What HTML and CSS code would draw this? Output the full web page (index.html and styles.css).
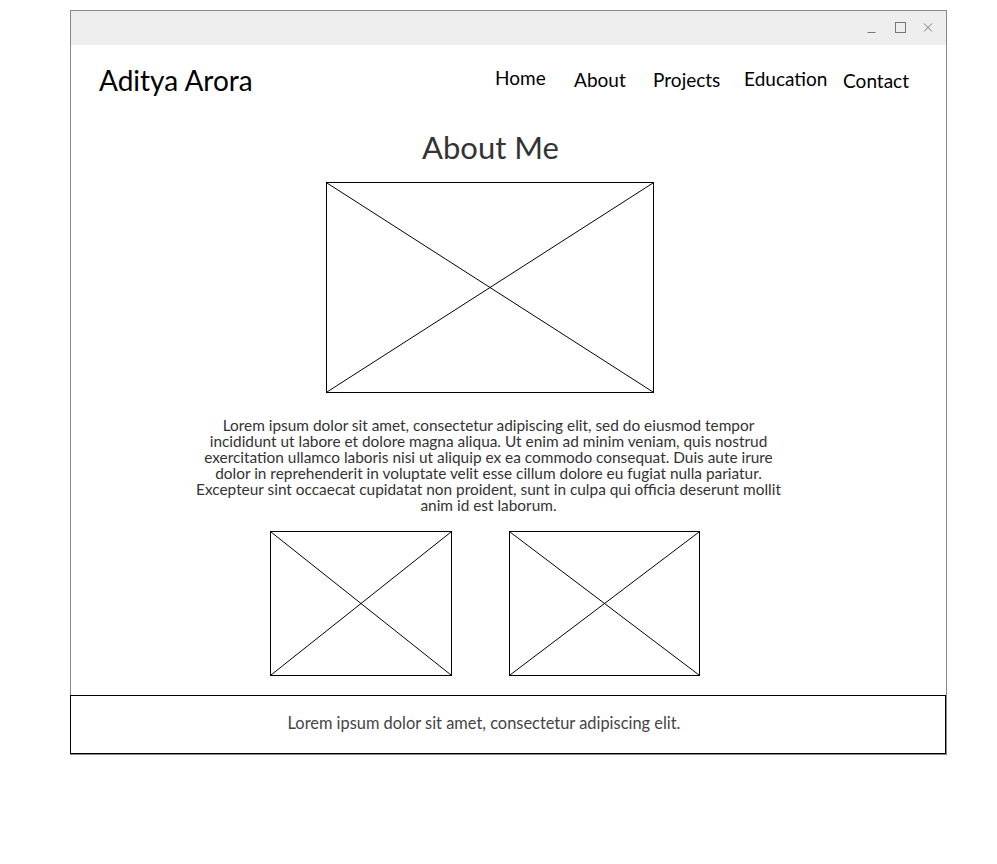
FILE: index.html
```html
<!DOCTYPE html>
<html lang="en">
<head>
<meta charset="utf-8">
<title>Aditya Arora</title>
<link rel="stylesheet" href="styles.css">
</head>
<body>
<div class="window">
  <div class="titlebar">
    <svg class="ctl" width="12" height="12" viewBox="0 0 12 12"><path d="M1.5 10.5h8" stroke="#777" stroke-width="1" fill="none"/></svg>
    <svg class="ctl" width="12" height="12" viewBox="0 0 12 12"><rect x="1.5" y="0.5" width="10" height="10" stroke="#777" stroke-width="1" fill="none"/></svg>
    <svg class="ctl" width="12" height="12" viewBox="0 0 12 12"><path d="M2 1.5l8 8M10 1.5l-8 8" stroke="#777" stroke-width="1" fill="none"/></svg>
  </div>
  <header class="header">
    <div class="brand">Aditya Arora</div>
    <nav class="nav">
      <a class="nav-item">Home</a>
      <a class="nav-item">About</a>
      <a class="nav-item">Projects</a>
      <a class="nav-item">Education</a>
      <a class="nav-item">Contact</a>
    </nav>
  </header>
  <main class="content">
    <h1 class="title">About Me</h1>
    <div class="ph ph-main">
      <svg viewBox="0 0 100 100" preserveAspectRatio="none"><path d="M0 0L100 100M100 0L0 100" stroke="#000" stroke-width="1" vector-effect="non-scaling-stroke" fill="none"/></svg>
    </div>
    <p class="text">Lorem ipsum dolor sit amet, consectetur adipiscing elit, sed do eiusmod tempor incididunt ut labore et dolore magna aliqua. Ut enim ad minim veniam, quis nostrud exercitation ullamco laboris nisi ut aliquip ex ea commodo consequat. Duis aute irure dolor in reprehenderit in voluptate velit esse cillum dolore eu fugiat nulla pariatur. Excepteur sint occaecat cupidatat non proident, sunt in culpa qui officia deserunt mollit anim id est laborum.</p>
    <div class="gallery">
      <div class="ph ph-a">
        <svg viewBox="0 0 100 100" preserveAspectRatio="none"><path d="M0 0L100 100M100 0L0 100" stroke="#000" stroke-width="1" vector-effect="non-scaling-stroke" fill="none"/></svg>
      </div>
      <div class="ph ph-b">
        <svg viewBox="0 0 100 100" preserveAspectRatio="none"><path d="M0 0L100 100M100 0L0 100" stroke="#000" stroke-width="1" vector-effect="non-scaling-stroke" fill="none"/></svg>
      </div>
    </div>
  </main>
  <footer class="footer">
    <p class="footer-text">Lorem ipsum dolor sit amet, consectetur adipiscing elit.</p>
  </footer>
</div>
</body>
</html>
```
FILE: styles.css
```css
html, body {
  margin: 0;
  padding: 0;
  background: #fff;
}
body {
  font-family: Lato, "Open Sans", sans-serif;
  color: #000;
}
.window {
  margin: 10px 0 0 70px;
  width: 875px;
  border: 1px solid #888;
  display: flex;
  flex-direction: column;
}
.titlebar {
  height: 34px;
  background: #eee;
  display: flex;
  justify-content: flex-end;
  align-items: center;
  gap: 16px;
  padding-right: 12px;
}
.ctl {
  display: block;
}
.header {
  display: flex;
  justify-content: space-between;
  align-items: flex-start;
  padding: 18px 37px 0 28px;
  height: 50px;
}
.brand {
  font-size: 28px;
  line-height: 34px;
}
.nav {
  display: grid;
  grid-template-columns: 79px 79px 91px 99px auto;
  align-items: start;
  margin-top: 3px;
  font-size: 19px;
  line-height: 24px;
}
.nav-item {
  color: #000;
  text-decoration: none;
}
.nav-item:nth-child(2),
.nav-item:nth-child(3) {
  padding-top: 2px;
}
.nav-item:nth-child(4) {
  padding-top: 1px;
}
.nav-item:nth-child(5) {
  padding-top: 3px;
}
.content {
  display: flex;
  flex-direction: column;
  align-items: center;
  padding-right: 40px;
}
.title {
  margin: 12px 0 0 4px;
  font-size: 31px;
  line-height: 44px;
  font-weight: 400;
  color: #333;
}
.ph {
  border: 1px solid #000;
  box-sizing: border-box;
}
.ph svg {
  display: block;
  width: 100%;
  height: 100%;
}
.ph-main {
  width: 328px;
  height: 211px;
  margin: 13px 0 0 2px;
}
.text {
  width: 590px;
  margin: 24px 0 0;
  font-size: 15.4px;
  line-height: 16px;
  text-align: center;
  color: #333;
}
.gallery {
  display: flex;
  gap: 57px;
  margin-top: 18px;
  padding-right: 8px;
}
.ph-a {
  width: 182px;
  height: 145px;
}
.ph-b {
  width: 191px;
  height: 145px;
}
.footer {
  margin: 19px 0 0 -1px;
  width: 876px;
  height: 59px;
  border: 1px solid #000;
  box-sizing: border-box;
  display: flex;
  align-items: center;
  padding: 0 48px 4px 0;
  justify-content: center;
}
.footer-text {
  margin: 0;
  font-size: 16.4px;
  color: #444;
}
```
